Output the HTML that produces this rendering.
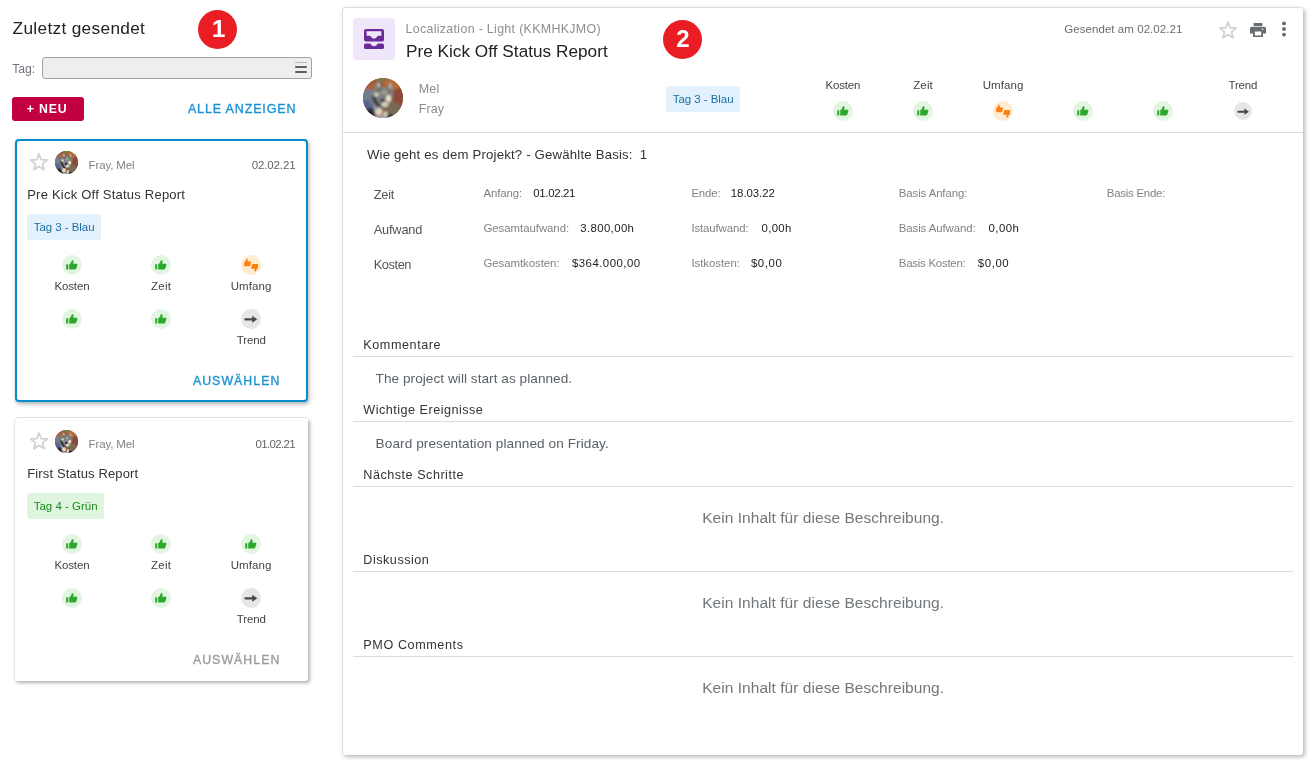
<!DOCTYPE html>
<html lang="de">
<head>
<meta charset="utf-8">
<title>Status Report</title>
<style>
*{box-sizing:border-box;margin:0;padding:0}
html,body{width:1312px;height:764px;overflow:hidden;background:#fff}
body{will-change:transform;font-family:"Liberation Sans",Arial,sans-serif;color:#333;position:relative;font-size:12px}
.t,.a{position:absolute;white-space:nowrap}
svg{display:block;overflow:visible}
.badge{width:39px;height:39px;border-radius:50%;background:#ea1c24}
.taginp{left:42px;top:57px;width:270px;height:22px;border:1px solid #a3a3a3;border-radius:3px;background:#eee}
.btnnew{left:12px;top:97px;width:72px;height:24px;border-radius:3px;background:#c3003f}
.card{position:absolute;left:15px;width:293px;height:263px;background:#fff}
.card.sel{width:292.5px;border:2px solid #068dcd;border-radius:4px;box-shadow:1px 2px 4px rgba(0,0,0,.32)}
.card.norm{border-radius:3px;box-shadow:0 -1px 0 #e2e2e2, -1px 0 0 #e8e8e8, 1.5px 2px 3.5px rgba(0,0,0,.3)}
.chip{height:26px;border-radius:3px}
.chip.blue{background:#e3f1fc}
.chip.green{background:#e0f5e0}
.ind{width:20px;height:20px;border-radius:50%}
.ind.g{background:#e1f5e1}
.ind.o{background:#ffecd2}
.ind.n{background:#e6e6e6}
.panel{left:342px;top:7px;width:961px;height:748px;border-top:1px solid #dedede;border-left:1px solid #dedede;border-radius:3px;background:#fff;box-shadow:2px 2px 4px rgba(0,0,0,.28)}
.hl{height:1px;background:#dcdcdc}
</style>
</head>
<body>
<svg width="0" height="0" style="position:absolute">
<defs>
<symbol id="star" viewBox="0 0 20 20"><path d="M10.00 2.00 L12.17 7.71 L18.27 8.01 L13.52 11.84 L15.11 17.74 L10.00 14.40 L4.89 17.74 L6.48 11.84 L1.73 8.01 L7.83 7.71 Z" fill="none" stroke="#d2d2d2" stroke-width="1.8" stroke-linejoin="round"/></symbol>
<symbol id="thumb" viewBox="0 0 20 20"><g transform="translate(4,5.1) scale(.97,.89)"><rect x="0.2" y="4.6" width="2.1" height="6" rx=".4"/><path d="M3.3 10.6 V4.9 C4.8 3.8 5.6 2.2 5.9 0.5 C6 0 6.6 -0.1 7.2 0.3 C8 0.9 8 2.2 7.4 4 H10.6 C11.6 4 12 4.8 11.7 5.6 L10.5 9.8 C10.3 10.4 9.8 10.6 9.3 10.6 Z"/></g></symbol>
<symbol id="arrow" viewBox="0 0 20 20"><path d="M4.4 9.2 H11.2 V6.8 L16.3 10.3 L11.2 13.8 V11.4 H4.4 A1.1 1.1 0 0 1 4.4 9.2 Z"/></symbol>
<symbol id="avatar" viewBox="0 0 40 40"><clipPath id="avc"><circle cx="20" cy="20" r="20"/></clipPath><filter id="avb" x="-20%" y="-20%" width="140%" height="140%"><feGaussianBlur stdDeviation="0.9"/></filter><g clip-path="url(#avc)"><rect width="40" height="40" fill="#9a5a3a"/><g filter="url(#avb)"><rect x="-4" y="-4" width="48" height="48" fill="#9a5a3a"/><ellipse cx="30" cy="6" rx="9" ry="6" fill="#b86c38"/><ellipse cx="19" cy="1" rx="6" ry="3" fill="#7c7a42"/><ellipse cx="7" cy="9" rx="7" ry="5" fill="#a8623c"/><ellipse cx="36" cy="20" rx="6" ry="10" fill="#8c4c38"/><ellipse cx="30" cy="32" rx="9" ry="8" fill="#786a52"/><ellipse cx="4" cy="17" rx="7" ry="6" fill="#737d8e"/><ellipse cx="5" cy="27" rx="6" ry="5" fill="#50628e"/><ellipse cx="9" cy="24" rx="3" ry="4" fill="#6f7684"/><ellipse cx="9" cy="34" rx="6" ry="4" fill="#2c2c34"/><path d="M12 7 L15 3 L18 9 L25 9 L28 4 L30 10 L30 20 L26 27 L18 30 L11 22 L9 15 Z" fill="#80807a"/><ellipse cx="17" cy="12" rx="3" ry="2" fill="#6a6a66"/><ellipse cx="25" cy="13" rx="2.500" ry="2" fill="#70706a"/><path d="M14.5 5 L16 4.5 L17 9 L15 9Z" fill="#c9c9c6"/><path d="M26.500 6 L28 5.500 L28.500 10 L26.500 10.500Z" fill="#c4c6c2"/><ellipse cx="13.500" cy="16.500" rx="2.400" ry="2" fill="#cfcdc2"/><ellipse cx="21" cy="14" rx="4" ry="2.500" fill="#9a9a90"/><ellipse cx="25.500" cy="20.500" rx="2.400" ry="3.400" fill="#ebe5d2"/><path d="M8 18 L12 19 L19 31 L16 33 Z" fill="#35353a"/><ellipse cx="17.500" cy="20.500" rx="2" ry="1.600" fill="#7a80a8"/><ellipse cx="19.300" cy="22.300" rx="1.800" ry="1.600" fill="#0e0e22"/><ellipse cx="22" cy="26.500" rx="3.200" ry="2.400" fill="#d9d3be"/><ellipse cx="15.500" cy="33.500" rx="3.600" ry="4" fill="#ded7c0"/><ellipse cx="12" cy="30" rx="2" ry="3" fill="#8f98a6"/><ellipse cx="22.500" cy="36" rx="2.400" ry="2.600" fill="#d6cfb8"/><ellipse cx="19" cy="40" rx="6" ry="2" fill="#9fb2d4"/><ellipse cx="27" cy="38" rx="3" ry="2" fill="#2a2a30"/></g></g></symbol>
</defs>
</svg>
<!-- LEFT -->
<div class="t" style="left:12.60px;top:18px;font-size:17.3px;line-height:20px;color:#222;letter-spacing:0.304px;">Zuletzt gesendet</div>
<div class="a badge" style="left:198px;top:10px"></div>
<div class="t" style="left:212.00px;top:15px;font-size:24px;line-height:27px;color:#fff;letter-spacing:0px;font-weight:700;">1</div>
<div class="t" style="left:12.20px;top:62px;font-size:12.2px;line-height:14px;color:#70757a;letter-spacing:-0.053px;">Tag:</div>
<div class="a taginp"><div class="a" style="left:252px;top:3.6px;width:12px;height:1px;background:#b8b8b8"></div><div class="a" style="left:252px;top:8px;width:12px;height:2px;background:#5a6066;border-radius:1px"></div><div class="a" style="left:252px;top:13px;width:12px;height:2px;background:#5a6066;border-radius:1px"></div></div>
<div class="a btnnew"></div>
<div class="t" style="left:26.80px;top:102px;font-size:12.3px;line-height:14px;color:#fff;letter-spacing:0.827px;font-weight:700;">+ NEU</div>
<div class="t" style="left:187.90px;top:102px;font-size:12.5px;line-height:14px;color:#1b93d2;letter-spacing:0.862px;-webkit-text-stroke:.35px #1b93d2;">ALLE ANZEIGEN</div>
<div class="card sel" style="top:139px"></div>
<svg class="a" style="left:28.9px;top:152.1px" width="20" height="20"><use href="#star"/></svg>
<svg class="a" style="left:55px;top:151px" width="23" height="23"><use href="#avatar"/></svg>
<div class="t" style="left:88.60px;top:159px;font-size:11.5px;line-height:12px;color:#808080;letter-spacing:-0.149px;">Fray, Mel</div>
<div class="t" style="left:251.70px;top:159px;font-size:11.5px;line-height:12px;color:#646464;letter-spacing:-0.127px;">02.02.21</div>
<div class="t" style="left:27.20px;top:187px;font-size:13px;line-height:15px;color:#333;letter-spacing:0.223px;">Pre Kick Off Status Report</div>
<div class="a chip blue" style="left:27px;top:214px;width:74px"></div>
<div class="t" style="left:33.70px;top:221px;font-size:11.5px;line-height:12px;color:#1a70a5;letter-spacing:-0.041px;">Tag 3 - Blau</div>
<div class="a ind g" style="left:62px;top:254.7px"><svg width="20" height="20" fill="#2ca82c"><use href="#thumb"/></svg></div>
<div class="t" style="left:54.40px;top:280px;font-size:11.5px;line-height:12px;color:#444;letter-spacing:-0.125px;">Kosten</div>
<div class="a ind g" style="left:151px;top:254.7px"><svg width="20" height="20" fill="#2ca82c"><use href="#thumb"/></svg></div>
<div class="t" style="left:151.00px;top:280px;font-size:11.5px;line-height:12px;color:#444;letter-spacing:0.284px;">Zeit</div>
<div class="a ind o" style="left:241px;top:254.7px"><svg width="20" height="20" viewBox="0 0 20 20" fill="#ff7f0e"><g transform="translate(0.5,3.7) scale(.81,.71)"><path d="M3.3 10.6 V4.9 C4.8 3.8 5.6 2.2 5.9 0.5 C6 0 6.6 -0.1 7.2 0.3 C8 0.9 8 2.2 7.4 4 H10.6 C11.6 4 12 4.8 11.7 5.6 L10.5 9.8 C10.3 10.4 9.8 10.6 9.3 10.6 Z"/></g><g transform="translate(19.7,16.5) scale(-.81,-.71)"><path d="M3.3 10.6 V4.9 C4.8 3.8 5.6 2.2 5.9 0.5 C6 0 6.6 -0.1 7.2 0.3 C8 0.9 8 2.2 7.4 4 H10.6 C11.6 4 12 4.8 11.7 5.6 L10.5 9.8 C10.3 10.4 9.8 10.6 9.3 10.6 Z"/></g></svg></div>
<div class="t" style="left:230.70px;top:280px;font-size:11.5px;line-height:12px;color:#444;letter-spacing:0.07px;">Umfang</div>
<div class="a ind g" style="left:62px;top:308.7px"><svg width="20" height="20" fill="#2ca82c"><use href="#thumb"/></svg></div>
<div class="a ind g" style="left:151px;top:308.7px"><svg width="20" height="20" fill="#2ca82c"><use href="#thumb"/></svg></div>
<div class="a ind n" style="left:241px;top:308.7px"><svg width="20" height="20" fill="#484848"><use href="#arrow"/></svg></div>
<div class="t" style="left:236.80px;top:334px;font-size:11.5px;line-height:12px;color:#444;letter-spacing:-0.153px;">Trend</div>
<div class="t" style="left:192.90px;top:374px;font-size:12.3px;line-height:14px;color:#1b93d2;letter-spacing:1.072px;-webkit-text-stroke:.35px #1b93d2;">AUSWÄHLEN</div>
<div class="card norm" style="top:418px"></div>
<svg class="a" style="left:28.9px;top:431.1px" width="20" height="20"><use href="#star"/></svg>
<svg class="a" style="left:55px;top:430px" width="23" height="23"><use href="#avatar"/></svg>
<div class="t" style="left:88.60px;top:438px;font-size:11.5px;line-height:12px;color:#808080;letter-spacing:-0.149px;">Fray, Mel</div>
<div class="t" style="left:255.50px;top:438px;font-size:11.5px;line-height:12px;color:#646464;letter-spacing:-0.67px;">01.02.21</div>
<div class="t" style="left:27.20px;top:466px;font-size:13px;line-height:15px;color:#333;letter-spacing:0.147px;">First Status Report</div>
<div class="a chip green" style="left:27px;top:493px;width:77px"></div>
<div class="t" style="left:33.70px;top:500px;font-size:11.5px;line-height:12px;color:#1d8a1d;letter-spacing:-0.004px;">Tag 4 - Grün</div>
<div class="a ind g" style="left:62px;top:533.7px"><svg width="20" height="20" fill="#2ca82c"><use href="#thumb"/></svg></div>
<div class="t" style="left:54.40px;top:559px;font-size:11.5px;line-height:12px;color:#444;letter-spacing:-0.125px;">Kosten</div>
<div class="a ind g" style="left:151px;top:533.7px"><svg width="20" height="20" fill="#2ca82c"><use href="#thumb"/></svg></div>
<div class="t" style="left:151.00px;top:559px;font-size:11.5px;line-height:12px;color:#444;letter-spacing:0.284px;">Zeit</div>
<div class="a ind g" style="left:241px;top:533.7px"><svg width="20" height="20" fill="#2ca82c"><use href="#thumb"/></svg></div>
<div class="t" style="left:230.70px;top:559px;font-size:11.5px;line-height:12px;color:#444;letter-spacing:0.07px;">Umfang</div>
<div class="a ind g" style="left:62px;top:587.7px"><svg width="20" height="20" fill="#2ca82c"><use href="#thumb"/></svg></div>
<div class="a ind g" style="left:151px;top:587.7px"><svg width="20" height="20" fill="#2ca82c"><use href="#thumb"/></svg></div>
<div class="a ind n" style="left:241px;top:587.7px"><svg width="20" height="20" fill="#484848"><use href="#arrow"/></svg></div>
<div class="t" style="left:236.80px;top:613px;font-size:11.5px;line-height:12px;color:#444;letter-spacing:-0.153px;">Trend</div>
<div class="t" style="left:192.90px;top:653px;font-size:12.3px;line-height:14px;color:#9b9b9b;letter-spacing:1.072px;-webkit-text-stroke:.35px #9b9b9b;">AUSWÄHLEN</div>
<!-- RIGHT -->
<div class="a panel"></div>
<div class="a" style="left:353px;top:18px;width:42px;height:42px;border-radius:4px;background:#f0e6fa"><svg style="position:absolute;left:11px;top:11px" width="20" height="20" viewBox="0 0 20 20" fill="#6b2c9b"><path fill-rule="evenodd" d="M2 0 H18 A2 2 0 0 1 20 2 V10.5 A2 2 0 0 1 18 12.5 H2 A2 2 0 0 1 0 10.5 V2 A2 2 0 0 1 2 0 Z M2.6 2.2 V6.8 H5.6 C6.3 6.8 6.6 7.2 7 7.8 C7.6 8.8 8.6 9.6 10 9.6 C11.4 9.6 12.4 8.8 13 7.8 C13.4 7.2 13.7 6.8 14.4 6.8 H17.4 V2.2 Z"/><path d="M1.6 14.6 H5.6 C6.3 14.6 6.6 15 7 15.5 C7.6 16.4 8.6 17.2 10 17.2 C11.4 17.2 12.4 16.4 13 15.5 C13.4 15 13.7 14.6 14.4 14.6 H18.4 A1.6 1.6 0 0 1 20 16.2 V18.4 A1.6 1.6 0 0 1 18.4 20 H1.6 A1.6 1.6 0 0 1 0 18.4 V16.2 A1.6 1.6 0 0 1 1.6 14.6 Z"/></svg></div>
<div class="t" style="left:405.50px;top:22px;font-size:12.4px;line-height:14px;color:#8e8e8e;letter-spacing:0.327px;">Localization - Light (KKMHKJMO)</div>
<div class="t" style="left:405.90px;top:41px;font-size:17.2px;line-height:20px;color:#222;letter-spacing:0.024px;">Pre Kick Off Status Report</div>
<div class="a badge" style="left:663px;top:20px"></div>
<div class="t" style="left:676.20px;top:25px;font-size:24px;line-height:27px;color:#fff;letter-spacing:0px;font-weight:700;">2</div>
<div class="t" style="left:1064.30px;top:23px;font-size:11.5px;line-height:12px;color:#6c6c6c;letter-spacing:0.057px;">Gesendet am 02.02.21</div>
<svg class="a" style="left:1218px;top:20.1px" width="20" height="20"><use href="#star"/></svg>
<svg class="a" style="left:1250px;top:23px" width="16" height="14" viewBox="0 0 16 14" fill="#676b72"><path d="M3.6 0 H12.4 V3 H3.6 Z"/><path fill-rule="evenodd" d="M1.8 3.8 H14.2 A1.8 1.8 0 0 1 16 5.6 V10.6 H13 V14 H3 V10.6 H0 V5.6 A1.8 1.8 0 0 1 1.8 3.8 Z M4.8 8.6 V12.4 H11.2 V8.6 Z M12.6 5.4 A.8 .8 0 1 0 12.6 7 A.8 .8 0 1 0 12.6 5.4 Z"/></svg>
<svg class="a" style="left:1281px;top:21px" width="6" height="16" viewBox="0 0 6 16" fill="#666a70"><circle cx="3" cy="2.4" r="1.9"/><circle cx="3" cy="8" r="1.9"/><circle cx="3" cy="13.6" r="1.9"/></svg>
<svg class="a" style="left:363px;top:77.6px" width="40" height="40"><use href="#avatar"/></svg>
<div class="t" style="left:418.80px;top:82px;font-size:12.5px;line-height:14px;color:#8a8a8a;letter-spacing:0.137px;">Mel</div>
<div class="t" style="left:418.80px;top:102px;font-size:12.5px;line-height:14px;color:#8a8a8a;letter-spacing:0.067px;">Fray</div>
<div class="a chip blue" style="left:666px;top:86px;width:74px"></div>
<div class="t" style="left:672.70px;top:93px;font-size:11.5px;line-height:12px;color:#1a70a5;letter-spacing:-0.041px;">Tag 3 - Blau</div>
<div class="t" style="left:825.45px;top:79px;font-size:11.5px;line-height:12px;color:#444;letter-spacing:-0.145px;">Kosten</div>
<div class="a ind g" style="left:833px;top:100.7px"><svg width="20" height="20" fill="#2ca82c"><use href="#thumb"/></svg></div>
<div class="t" style="left:913.20px;top:79px;font-size:11.5px;line-height:12px;color:#444;letter-spacing:0.151px;">Zeit</div>
<div class="a ind g" style="left:913px;top:100.7px"><svg width="20" height="20" fill="#2ca82c"><use href="#thumb"/></svg></div>
<div class="t" style="left:982.65px;top:79px;font-size:11.5px;line-height:12px;color:#444;letter-spacing:0.09px;">Umfang</div>
<div class="a ind o" style="left:993px;top:100.7px"><svg width="20" height="20" viewBox="0 0 20 20" fill="#ff7f0e"><g transform="translate(0.5,3.7) scale(.81,.71)"><path d="M3.3 10.6 V4.9 C4.8 3.8 5.6 2.2 5.9 0.5 C6 0 6.6 -0.1 7.2 0.3 C8 0.9 8 2.2 7.4 4 H10.6 C11.6 4 12 4.8 11.7 5.6 L10.5 9.8 C10.3 10.4 9.8 10.6 9.3 10.6 Z"/></g><g transform="translate(19.7,16.5) scale(-.81,-.71)"><path d="M3.3 10.6 V4.9 C4.8 3.8 5.6 2.2 5.9 0.5 C6 0 6.6 -0.1 7.2 0.3 C8 0.9 8 2.2 7.4 4 H10.6 C11.6 4 12 4.8 11.7 5.6 L10.5 9.8 C10.3 10.4 9.8 10.6 9.3 10.6 Z"/></g></svg></div>
<div class="a ind g" style="left:1073px;top:100.7px"><svg width="20" height="20" fill="#2ca82c"><use href="#thumb"/></svg></div>
<div class="a ind g" style="left:1153px;top:100.7px"><svg width="20" height="20" fill="#2ca82c"><use href="#thumb"/></svg></div>
<div class="t" style="left:1228.50px;top:79px;font-size:11.5px;line-height:12px;color:#444;letter-spacing:-0.153px;">Trend</div>
<div class="a ind n" style="left:1233.7px;top:101.7px;width:18.6px;height:18.6px"><svg width="18.6" height="18.6" viewBox="0 0 20 20" fill="#484848"><path transform="translate(0.4,0.5) scale(.96)" d="M4.4 9.2 H11.2 V6.8 L16.3 10.3 L11.2 13.8 V11.4 H4.4 A1.1 1.1 0 0 1 4.4 9.2 Z"/></svg></div>
<div class="a hl" style="left:343px;top:132px;width:960px"></div>
<div class="t" style="left:366.90px;top:147px;font-size:13.2px;line-height:15px;color:#333;letter-spacing:0.186px;">Wie geht es dem Projekt? - Gewählte Basis:</div>
<div class="t" style="left:639.70px;top:147px;font-size:13.2px;line-height:15px;color:#333;letter-spacing:0px;">1</div>
<div class="t" style="left:373.70px;top:187px;font-size:12.8px;line-height:15px;color:#555;letter-spacing:-0.237px;">Zeit</div>
<div class="t" style="left:373.70px;top:222px;font-size:12.8px;line-height:15px;color:#555;letter-spacing:-0.182px;">Aufwand</div>
<div class="t" style="left:373.70px;top:257px;font-size:12.8px;line-height:15px;color:#555;letter-spacing:-0.414px;">Kosten</div>
<div class="t" style="left:483.50px;top:187px;font-size:11.4px;line-height:12px;color:#828282;letter-spacing:-0.095px;">Anfang:</div>
<div class="t" style="left:533.30px;top:187px;font-size:11.4px;line-height:12px;color:#222;letter-spacing:-0.315px;">01.02.21</div>
<div class="t" style="left:483.50px;top:222px;font-size:11.4px;line-height:12px;color:#828282;letter-spacing:-0.037px;">Gesamtaufwand:</div>
<div class="t" style="left:580.20px;top:222px;font-size:11.4px;line-height:12px;color:#222;letter-spacing:0.384px;">3.800,00h</div>
<div class="t" style="left:483.50px;top:257px;font-size:11.4px;line-height:12px;color:#828282;letter-spacing:-0.047px;">Gesamtkosten:</div>
<div class="t" style="left:572.00px;top:257px;font-size:11.4px;line-height:12px;color:#222;letter-spacing:0.472px;">$364.000,00</div>
<div class="t" style="left:691.40px;top:187px;font-size:11.4px;line-height:12px;color:#828282;letter-spacing:-0.128px;">Ende:</div>
<div class="t" style="left:730.80px;top:187px;font-size:11.4px;line-height:12px;color:#222;letter-spacing:-0.043px;">18.03.22</div>
<div class="t" style="left:691.40px;top:222px;font-size:11.4px;line-height:12px;color:#828282;letter-spacing:-0.111px;">Istaufwand:</div>
<div class="t" style="left:761.60px;top:222px;font-size:11.4px;line-height:12px;color:#222;letter-spacing:0.311px;">0,00h</div>
<div class="t" style="left:691.40px;top:257px;font-size:11.4px;line-height:12px;color:#828282;letter-spacing:-0.032px;">Istkosten:</div>
<div class="t" style="left:750.90px;top:257px;font-size:11.4px;line-height:12px;color:#222;letter-spacing:0.586px;">$0,00</div>
<div class="t" style="left:898.80px;top:187px;font-size:11.4px;line-height:12px;color:#828282;letter-spacing:-0.093px;">Basis Anfang:</div>
<div class="t" style="left:898.80px;top:222px;font-size:11.4px;line-height:12px;color:#828282;letter-spacing:-0.083px;">Basis Aufwand:</div>
<div class="t" style="left:988.60px;top:222px;font-size:11.4px;line-height:12px;color:#222;letter-spacing:0.411px;">0,00h</div>
<div class="t" style="left:898.80px;top:257px;font-size:11.4px;line-height:12px;color:#828282;letter-spacing:-0.226px;">Basis Kosten:</div>
<div class="t" style="left:977.80px;top:257px;font-size:11.4px;line-height:12px;color:#222;letter-spacing:0.586px;">$0,00</div>
<div class="t" style="left:1106.80px;top:187px;font-size:11.4px;line-height:12px;color:#828282;letter-spacing:-0.222px;">Basis Ende:</div>
<div class="t" style="left:363.30px;top:338px;font-size:12.6px;line-height:14px;color:#333;letter-spacing:0.574px;">Kommentare</div>
<div class="a hl" style="left:353px;top:356px;width:940px"></div>
<div class="t" style="left:375.60px;top:371px;font-size:13.6px;line-height:15px;color:#5a6268;letter-spacing:0.048px;">The project will start as planned.</div>
<div class="t" style="left:363.30px;top:403px;font-size:12.6px;line-height:14px;color:#333;letter-spacing:0.498px;">Wichtige Ereignisse</div>
<div class="a hl" style="left:353px;top:421px;width:940px"></div>
<div class="t" style="left:375.60px;top:436px;font-size:13.6px;line-height:15px;color:#5a6268;letter-spacing:0.081px;">Board presentation planned on Friday.</div>
<div class="t" style="left:363.30px;top:468px;font-size:12.6px;line-height:14px;color:#333;letter-spacing:0.519px;">Nächste Schritte</div>
<div class="a hl" style="left:353px;top:486px;width:940px"></div>
<div class="t" style="left:702.20px;top:509px;font-size:15.5px;line-height:17px;color:#72777b;letter-spacing:0.044px;">Kein Inhalt für diese Beschreibung.</div>
<div class="t" style="left:363.30px;top:553px;font-size:12.6px;line-height:14px;color:#333;letter-spacing:0.52px;">Diskussion</div>
<div class="a hl" style="left:353px;top:571px;width:940px"></div>
<div class="t" style="left:702.20px;top:594px;font-size:15.5px;line-height:17px;color:#72777b;letter-spacing:0.044px;">Kein Inhalt für diese Beschreibung.</div>
<div class="t" style="left:363.30px;top:638px;font-size:12.6px;line-height:14px;color:#333;letter-spacing:0.599px;">PMO Comments</div>
<div class="a hl" style="left:353px;top:656px;width:940px"></div>
<div class="t" style="left:702.20px;top:679px;font-size:15.5px;line-height:17px;color:#72777b;letter-spacing:0.044px;">Kein Inhalt für diese Beschreibung.</div>
</body>
</html>
